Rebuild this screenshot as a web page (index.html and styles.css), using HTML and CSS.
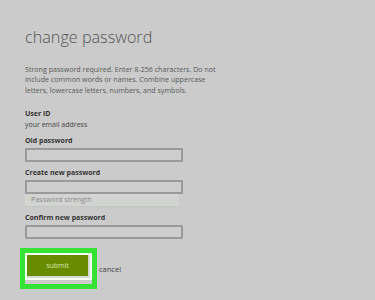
FILE: index.html
```html
<!DOCTYPE html>
<html>
<head>
<meta charset="utf-8">
<link rel="stylesheet" href="styles.css">
</head>
<body>
<div class="page">
  <h1 class="title">change password</h1>
  <p class="intro">Strong password required. Enter 8-256 characters. Do not<br>include common words or names. Combine uppercase<br>letters, lowercase letters, numbers, and symbols.</p>
  <div class="field">
    <div class="label">User ID</div>
    <div class="value">your email address</div>
  </div>
  <div class="field">
    <div class="label">Old password</div>
    <div class="input"></div>
  </div>
  <div class="field">
    <div class="label">Create new password</div>
    <div class="input"></div>
    <div class="strength">Password strength</div>
  </div>
  <div class="field">
    <div class="label">Confirm new password</div>
    <div class="input"></div>
  </div>
  <div class="actions">
    <div class="highlight">
      <div class="ring"><div class="submit">submit</div></div>
    </div>
    <span class="cancel">cancel</span>
  </div>
</div>
</body>
</html>
```
FILE: styles.css
```css
html, body {
  margin: 0;
  padding: 0;
  background: #cbcbcb;
}
body {
  width: 375px;
  height: 300px;
  overflow: hidden;
  font-family: "Open Sans", "Noto Sans", sans-serif;
  color: #555;
}
.page {
  padding: 26px 0 0 25px;
  display: flex;
  flex-direction: column;
}
.title {
  margin: 0;
  font-weight: 300;
  font-size: 16.2px;
  line-height: 22px;
  color: #555;
}
.intro {
  margin: 16px 0 0 0;
  font-size: 7.1px;
  line-height: 10.3px;
  color: #5a5a5a;
}
.field {
  display: flex;
  flex-direction: column;
}
.field:first-of-type {
  margin-top: 14px;
}
.label {
  font-size: 7px;
  font-weight: 700;
  line-height: 10px;
  color: #333;
}
.value {
  font-size: 7px;
  line-height: 11px;
  color: #444;
}
.field + .field {
  margin-top: 6px;
}
.input {
  margin-top: 2px;
  width: 154px;
  height: 10px;
  border: 2px solid #9a9a9a;
  background: #cecece;
}
.strength {
  width: 154px;
  height: 13px;
  margin-top: 0;
  padding-left: 6px;
  box-sizing: border-box;
  background: #d2d4d2;
  border-bottom: 1px solid #c4c6c4;
  font-size: 7px;
  line-height: 12px;
  color: #8a8a8a;
}
.strength + * {
  margin-top: 0;
}
.actions {
  margin-top: 9px;
  margin-left: -5px;
  display: flex;
  align-items: center;
  gap: 2px;
}
.highlight {
  border: 5px solid #35e335;
  padding: 0;
  width: 67px;
  height: 31px;
}
.ring {
  border: 2px solid #f4fff0;
  height: 27px;
  box-sizing: border-box;
  padding: 0 2px 4px 0;
  background: #d6d9d3;
}
.submit {
  height: 21px;
  background: #678c00;
  color: #d6e6b4;
  font-size: 7px;
  line-height: 21px;
  text-align: center;
}
.cancel {
  font-size: 7.5px;
  color: #444;
  margin-top: 1px;
}
```
